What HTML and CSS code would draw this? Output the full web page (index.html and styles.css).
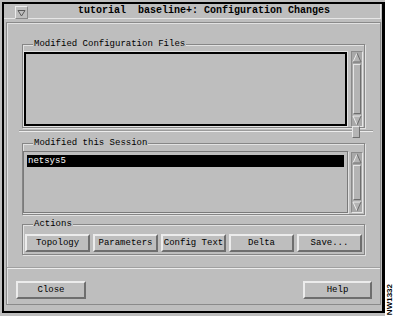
FILE: index.html
```html
<!DOCTYPE html>
<html>
<head>
  <title>Configuration Changes</title>
  <link rel="stylesheet" href="styles.css">
</head>
<body>
  <div class="screen">
    <div class="win">
      <div class="titlebar">
        <div class="menu-btn">
          <svg width="11" height="11" viewBox="0 0 11 11"><path d="M2 3.5 H9 L5.5 9 Z" fill="none" stroke="#5a5a5a" stroke-width="1"/></svg>
        </div>
        <div class="title">tutorial  baseline+: Configuration Changes</div>
      </div>
      <div class="panel">
        <div class="panes">
          <div class="group g1">
            <span class="group-label">Modified Configuration Files</span>
            <div class="row">
              <div class="list list-focus"></div>
              <div class="sb sb1">
                <svg class="arrow" width="10" height="11" viewBox="0 0 10 11"><path d="M5 1 L9 10 L1 10 Z" fill="#b4b4b4"/><path d="M1 10 L5 1" stroke="#ececec"/><path d="M5 1 L9 10 L1 10" fill="none" stroke="#6e6e6e"/></svg>
                <div class="thumb"></div>
                <svg class="arrow" width="10" height="11" viewBox="0 0 10 11"><path d="M1 1 L9 1 L5 10 Z" fill="#b4b4b4"/><path d="M1 1 L9 1 M1 1 L5 10" fill="none" stroke="#ececec"/><path d="M9 1 L5 10" stroke="#6e6e6e"/></svg>
              </div>
            </div>
          </div>
          <div class="sash-line"></div>
          <div class="sash"></div>
          <div class="group g2">
            <span class="group-label">Modified this Session</span>
            <div class="row row2">
              <div class="list list2">
                <div class="item selected">netsys5</div>
              </div>
              <div class="sb sb2">
                <svg class="arrow" width="10" height="11" viewBox="0 0 10 11"><path d="M5 1 L9 10 L1 10 Z" fill="#b4b4b4"/><path d="M1 10 L5 1" stroke="#ececec"/><path d="M5 1 L9 10 L1 10" fill="none" stroke="#6e6e6e"/></svg>
                <div class="thumb"></div>
                <svg class="arrow" width="10" height="11" viewBox="0 0 10 11"><path d="M1 1 L9 1 L5 10 Z" fill="#b4b4b4"/><path d="M1 1 L9 1 M1 1 L5 10" fill="none" stroke="#ececec"/><path d="M9 1 L5 10" stroke="#6e6e6e"/></svg>
              </div>
            </div>
          </div>
        </div>
        <div class="group actions">
          <span class="group-label">Actions</span>
          <button class="btn">Topology</button>
          <button class="btn">Parameters</button>
          <button class="btn">Config Text</button>
          <button class="btn">Delta</button>
          <button class="btn">Save...</button>
        </div>
        <div class="sep"></div>
        <div class="footer">
          <button class="btn btn-close">Close</button>
          <button class="btn btn-help">Help</button>
        </div>
      </div>
    </div>
    <div class="tag"><span>NW1332</span></div>
  </div>
</body>
</html>
```

FILE: styles.css
```css
body {
  margin: 0;
  padding: 0;
  background-color: #bebebe;
  font-family: "Liberation Mono", "DejaVu Sans Mono", monospace;
  color: #000;
}

.screen {
  display: flex;
  width: 395px;
  height: 316px;
}

.win {
  width: 378px;
  height: 307px;
  margin: 2px 0 0 2px;
  border: 2px solid #000;
  border-right-width: 3px;
}

.tag {
  flex: 1;
  background-color: #fff;
  display: flex;
  flex-direction: column;
  justify-content: flex-end;
  align-items: center;
  padding-bottom: 1px;
}
.tag span {
  writing-mode: vertical-rl;
  transform: rotate(180deg);
  font-family: "Liberation Sans", Arial, sans-serif;
  font-weight: bold;
  font-size: 8px;
  line-height: 8px;
}

/* title bar */
.titlebar {
  display: flex;
  align-items: center;
  height: 14px;
  margin-right: 1px;
  padding-left: 11px;
  border-bottom: 1px solid #e6e6e6;
  border-right: 1px solid #e6e6e6;
}
.menu-btn {
  width: 13px;
  height: 13px;
  margin-top: 2px;
  box-sizing: border-box;
  border: 1px solid;
  border-color: #ececec #8a8a8a #8a8a8a #ececec;
  display: flex;
  align-items: center;
  justify-content: center;
}
.title {
  flex: 1;
  text-align: center;
  white-space: pre;
  font-weight: bold;
  font-size: 10px;
  line-height: 14px;
}

/* client area */
.panel {
  height: 281px;
  margin: 3px 1px 0 2px;
  border: 1px solid #8a8a8a;
  box-shadow: inset 1px 1px 0 #e2e2e2;
}

.panes {
  position: relative;
  margin: 21px 7px 0 12px;
  padding: 0 8px 0 3px;
}

.group {
  position: relative;
  box-sizing: border-box;
  border: 1px solid #868686;
  box-shadow: inset 1px 1px 0 #e2e2e2, 1px 1px 0 #e2e2e2;
}
.group-label {
  position: absolute;
  top: -6px;
  left: 10px;
  padding: 0 1px;
  background-color: #bebebe;
  font-size: 9px;
  line-height: 11px;
  white-space: pre;
}

.row {
  display: flex;
  gap: 4px;
}

.g1 {
  height: 84px;
  padding: 7px 1px 1px 1px;
}
.g2 {
  height: 72px;
  margin-top: 11px;
  padding: 7px 1px 1px 0;
}
.row2 {
  gap: 3px;
}

.list {
  box-sizing: border-box;
}
.list-focus {
  width: 323px;
  height: 74px;
  border: 2px solid #000;
  box-shadow: 0 0 0 1px #e2e2e2;
}
.list2 {
  width: 325px;
  height: 62px;
  border: 1px solid #7a7a7a;
  box-shadow: 1px 1px 0 #e2e2e2;
  padding: 3px;
}
.item {
  height: 12px;
  font-size: 9px;
  line-height: 12px;
  padding-left: 1px;
}
.selected {
  background-color: #000;
  color: #fff;
}

/* scrollbars */
.sb {
  width: 12px;
  box-sizing: border-box;
  border: 1px solid;
  border-color: #8a8a8a #e6e6e6 #e6e6e6 #8a8a8a;
  background-color: #a8a8a8;
  display: flex;
  flex-direction: column;
  align-items: center;
}
.sb1 {
  height: 76px;
  margin-top: -1px;
}
.sb2 {
  height: 61px;
  margin-top: 1px;
}
.arrow {
  display: block;
  flex: none;
}
.thumb {
  flex: 1;
  width: 8px;
  margin: 1px 0;
  box-sizing: border-box;
  border: 1px solid;
  border-color: #e6e6e6 #6e6e6e #6e6e6e #e6e6e6;
  background-color: #b4b4b4;
}

/* pane sash */
.sash-line {
  margin: 2px -8px 0 -3px;
  border-top: 1px solid #9a9a9a;
  border-bottom: 1px solid #ececec;
}
.sash {
  position: absolute;
  left: 333px;
  top: 82px;
  width: 8px;
  height: 12px;
  box-sizing: border-box;
  border: 1px solid;
  border-color: #e6e6e6 #6e6e6e #6e6e6e #e6e6e6;
  background-color: #b4b4b4;
}

/* actions */
.actions {
  display: flex;
  gap: 3px;
  width: 343px;
  height: 31px;
  margin: 9px 0 0 15px;
  padding: 9px 0 0 2px;
}

.btn {
  width: 65px;
  height: 18px;
  margin: 0;
  padding: 0;
  box-sizing: border-box;
  border: 2px solid;
  border-color: #ececec #6e6e6e #6e6e6e #ececec;
  background-color: #bebebe;
  font-family: "Liberation Mono", "DejaVu Sans Mono", monospace;
  font-size: 9px;
  line-height: 14px;
  color: #000;
  text-align: center;
}

.sep {
  margin-top: 12px;
  border-top: 1px solid #a0a0a0;
  border-bottom: 1px solid #ececec;
}

.footer {
  display: flex;
  justify-content: space-between;
  margin-top: 12px;
  padding: 0 8px 0 9px;
}
.btn-close {
  width: 70px;
}
.btn-help {
  width: 69px;
}
```
